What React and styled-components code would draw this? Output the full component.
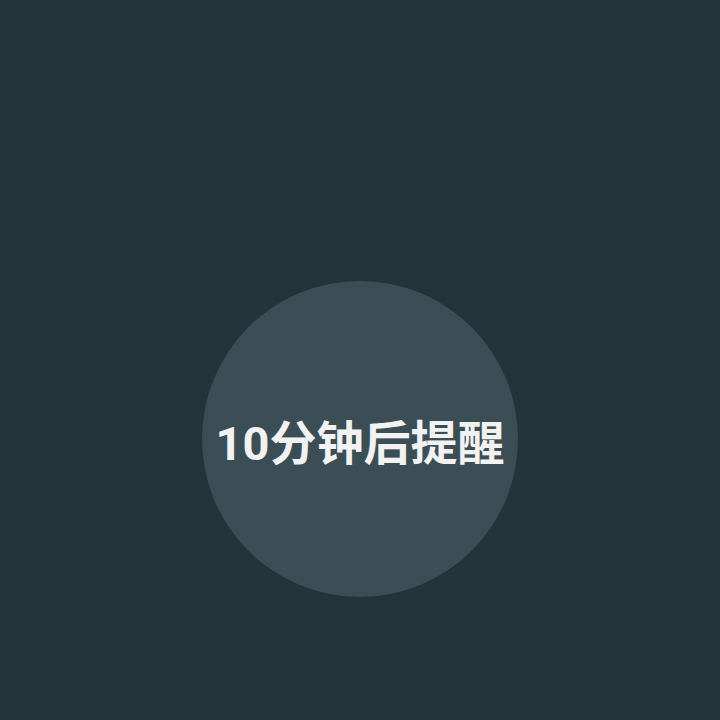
import React from "react";
import styled, { createGlobalStyle } from "styled-components";

const GlobalStyle = createGlobalStyle`
  html, body {
    margin: 0;
    padding: 0;
    background: #23343b;
  }
`;

const Screen = styled.div`
  width: 720px;
  height: 720px;
  box-sizing: border-box;
  padding-top: 281px;
  display: flex;
  justify-content: center;
  align-items: flex-start;
  background: #23343b;
`;

const SnoozeButton = styled.button`
  width: 316px;
  height: 316px;
  border: none;
  border-radius: 50%;
  background: #3b4e55;
  color: #f2f2f2;
  display: flex;
  align-items: center;
  justify-content: center;
  padding: 0;
  font-family: Roboto, "Noto Sans CJK SC", sans-serif;
  font-weight: 700;
  font-size: 47px;
  letter-spacing: 0;
  cursor: pointer;
`;

const App = () => {
  return (
    <>
      <GlobalStyle />
      <Screen>
        <SnoozeButton>10分钟后提醒</SnoozeButton>
      </Screen>
    </>
  );
};

export default App;
